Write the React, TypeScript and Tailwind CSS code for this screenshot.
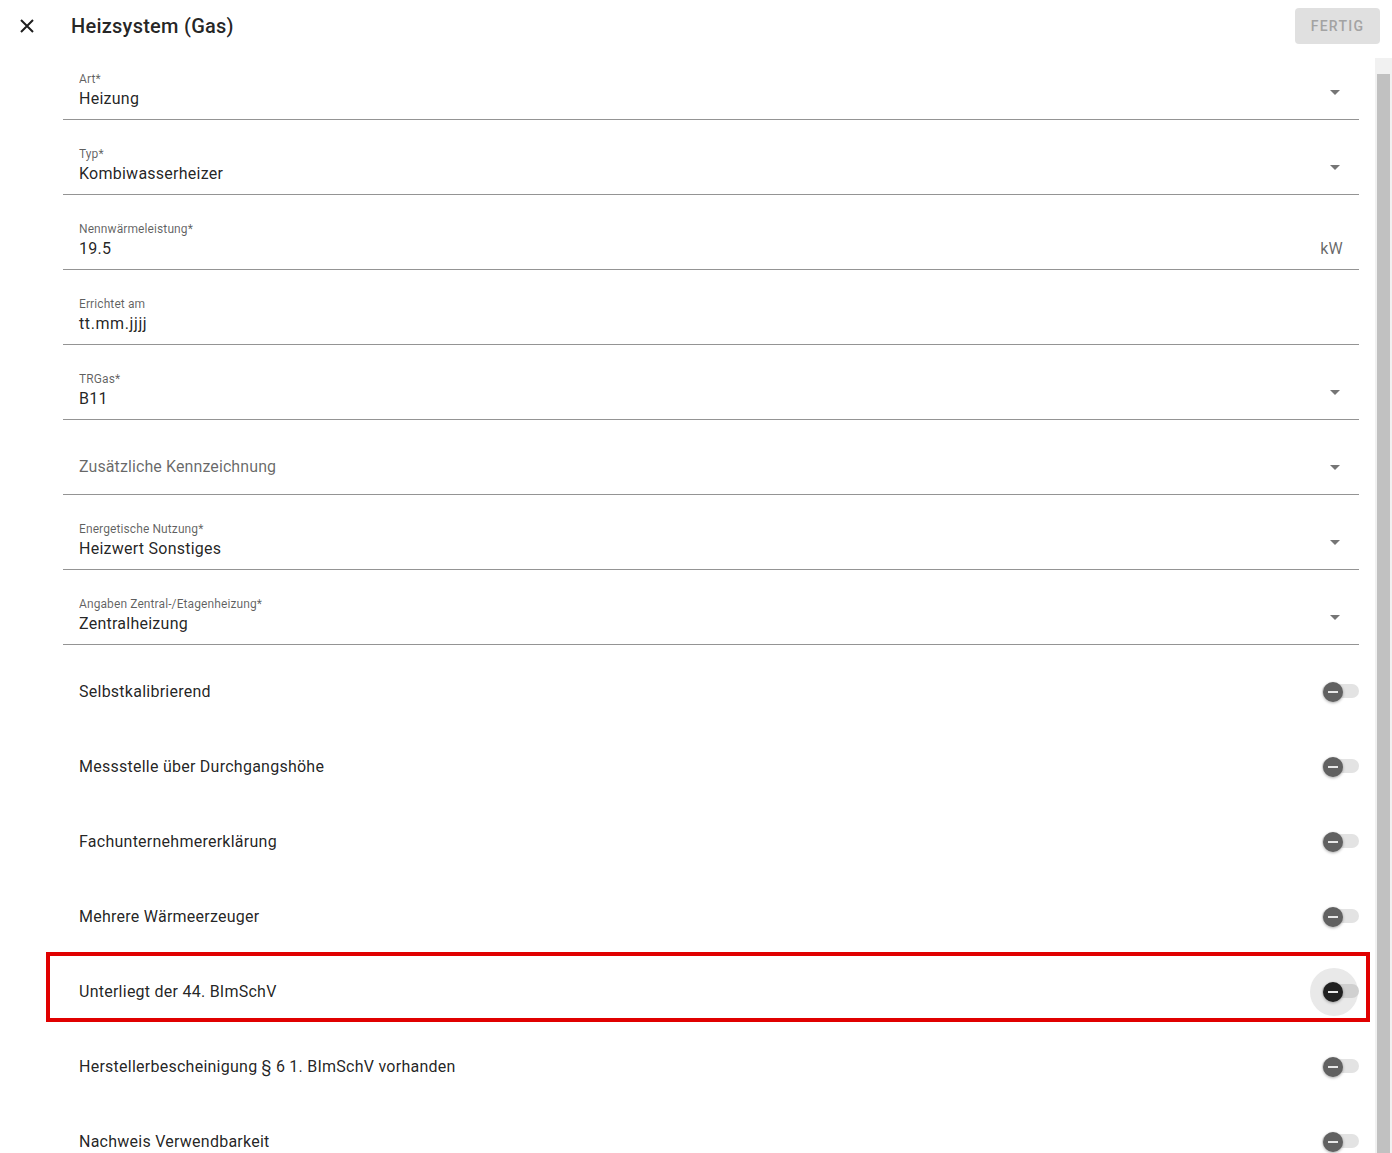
import React from "react";

type Field = {
  label?: string;
  value: string;
  kind: "select" | "input" | "date";
  suffix?: string;
  placeholder?: boolean;
};

const fields: Field[] = [
  { label: "Art*", value: "Heizung", kind: "select" },
  { label: "Typ*", value: "Kombiwasserheizer", kind: "select" },
  { label: "Nennwärmeleistung*", value: "19.5", kind: "input", suffix: "kW" },
  { label: "Errichtet am", value: "tt.mm.jjjj", kind: "date" },
  { label: "TRGas*", value: "B11", kind: "select" },
  { value: "Zusätzliche Kennzeichnung", kind: "select", placeholder: true },
  { label: "Energetische Nutzung*", value: "Heizwert Sonstiges", kind: "select" },
  { label: "Angaben Zentral-/Etagenheizung*", value: "Zentralheizung", kind: "select" },
];

const toggles = [
  "Selbstkalibrierend",
  "Messstelle über Durchgangshöhe",
  "Fachunternehmererklärung",
  "Mehrere Wärmeerzeuger",
  "Unterliegt der 44. BImSchV",
  "Herstellerbescheinigung § 6 1. BImSchV vorhanden",
  "Nachweis Verwendbarkeit",
];

function Arrow() {
  return (
    <svg width="10" height="5" viewBox="0 0 10 5" className="mb-[24px] mr-[19px] shrink-0">
      <path d="M0 0 L5 5 L10 0 Z" fill="#757575" />
    </svg>
  );
}

function FieldRow({ field, first }: { field: Field; first?: boolean }) {
  return (
    <div
      className={`flex items-end border-b border-[#949494] pl-4 ${
        first ? "h-[62px]" : "h-[75px]"
      }`}
    >
      <div className={`flex min-w-0 flex-1 flex-col ${field.placeholder ? "self-start pt-[35px]" : "pb-[8px]"}`}>
        {field.label && (
          <span className="text-[12px] leading-4 tracking-[0.1px] text-[#000000a0]">{field.label}</span>
        )}
        <span
          className={`text-[16px] leading-6 ${
            field.placeholder
              ? "tracking-[0.1px] text-[#00000099]"
              : field.kind === "date"
                ? "tracking-[0.6px] text-[#000000de]"
                : "tracking-[0.25px] text-[#000000de]"
          }`}
        >
          {field.value}
        </span>
      </div>
      {field.kind === "select" && <Arrow />}
      {field.suffix && (
        <span className="mb-[8px] mr-4 text-[16px] leading-6 tracking-[0.25px] text-[#00000099]">{field.suffix}</span>
      )}
    </div>
  );
}

function Toggle({ active }: { active?: boolean }) {
  return (
    <div className="relative h-[14px] w-[37px] shrink-0">
      {active && (
        <div className="absolute left-[-12px] top-[-16px] h-12 w-12 rounded-full bg-[#e9e9e9]" />
      )}
      <div className={`absolute inset-0 rounded-full ${active ? "bg-[#d0d0d0]" : "bg-[#e3e3e3]"}`} />
      <div
        className={`absolute left-[1px] top-[-2px] flex h-5 w-5 items-center justify-center rounded-full shadow-[0_1px_3px_rgba(0,0,0,0.35)] ${
          active ? "bg-[#212121]" : "bg-[#616161]"
        }`}
      >
        <div className="h-[2px] w-[10px] bg-[#e6e6e6]" />
      </div>
    </div>
  );
}

function ToggleRow({ label, active }: { label: string; active?: boolean }) {
  return (
    <div className="relative flex h-[75px] items-start pl-4 pt-[35px]">
      <span className="flex-1 text-[16px] leading-6 tracking-[0.25px] text-[#000000de]">{label}</span>
      <div className="mt-[4px]">
        <Toggle active={active} />
      </div>
      {active && (
        <div className="pointer-events-none absolute bottom-[-2px] left-[-17px] right-[-11px] top-[7px] border-4 border-[#e00000]" />
      )}
    </div>
  );
}

export default function App() {
  return (
    <div
      className="flex h-[1153px] flex-col overflow-hidden bg-white"
      style={{ fontFamily: "Roboto, 'Liberation Sans', sans-serif" }}
    >
      <header className="flex h-[58px] shrink-0 items-start">
        <button className="ml-[20px] mt-[19px] flex h-[14px] w-[14px] items-center justify-center">
          <svg width="14" height="14" viewBox="0 0 14 14">
            <path d="M1 1 L13 13 M13 1 L1 13" stroke="#1f1f1f" strokeWidth="2" />
          </svg>
        </button>
        <h1 className="ml-[37px] mt-[13px] text-[20px] font-medium leading-[26px] tracking-[0.25px] text-[#000000de]">
          Heizsystem (Gas)
        </h1>
        <button className="ml-auto mr-3 mt-2 h-9 w-[85px] rounded bg-[#e0e0e0] text-[14px] font-medium tracking-[1.25px] text-[#a3a3a3]">
          FERTIG
        </button>
      </header>

      <div className="flex min-h-0 flex-1">
        <main className="min-w-0 flex-1 overflow-hidden pl-[63px] pr-4">
          {fields.map((f, i) => (
            <FieldRow key={f.value} field={f} first={i === 0} />
          ))}
          {toggles.map((t, i) => (
            <ToggleRow key={t} label={t} active={i === 4} />
          ))}
        </main>
        <div className="flex w-[17px] shrink-0 flex-col bg-[#f1f1f1] pt-4">
          <div className="ml-[2px] w-[13px] flex-1 bg-[#c1c1c1]" />
        </div>
      </div>
    </div>
  );
}
